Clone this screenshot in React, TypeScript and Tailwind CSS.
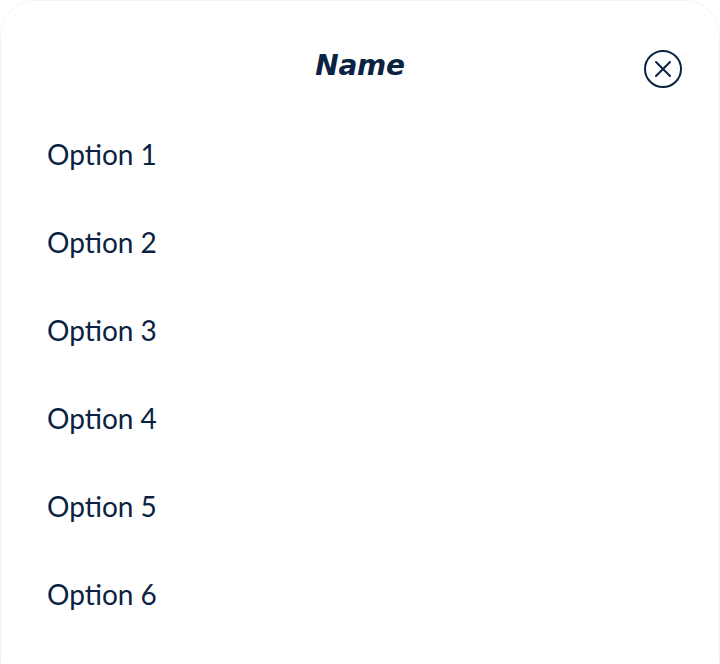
const options = ['Option 1', 'Option 2', 'Option 3', 'Option 4', 'Option 5', 'Option 6'];

export default function App() {
  return (
    <div className="min-h-screen w-full bg-white font-['Lato',sans-serif] text-[#0a2342]">
      <div className="h-[664px] rounded-t-[36px] border-t border-x border-dotted border-gray-200 bg-white">
        {/* Header */}
        <div className="relative flex h-[109px] items-start justify-center pt-[44px]">
          <h2 className="font-['DejaVu_Sans',sans-serif] text-[28px] font-bold italic leading-[42px] tracking-[-0.01em]">Name</h2>
          <button className="absolute right-[37px] top-[49px] flex h-[38px] w-[38px] items-center justify-center rounded-full border-2 border-[#0a2342]">
            <svg width="18" height="18" viewBox="0 0 18 18" fill="none" stroke="currentColor" strokeWidth="2" strokeLinecap="round">
              <path d="M2 2L16 16M16 2L2 16" />
            </svg>
          </button>
        </div>

        {/* Options */}
        <ul className="flex flex-col">
          {options.map(o => (
            <li key={o} className="flex h-[88px] items-center px-[46px] text-[28px] font-normal leading-none">
              {o}
            </li>
          ))}
        </ul>
      </div>
    </div>
  );
}
